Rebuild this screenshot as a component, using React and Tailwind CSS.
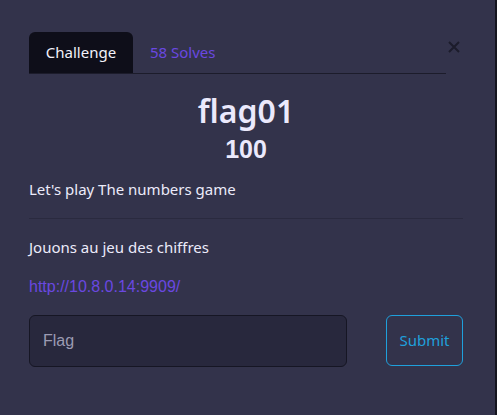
import React, { useState } from 'react';

const ChallengeModal = () => {
    const [tab, setTab] = useState('challenge');
    const [flag, setFlag] = useState('');

    return (
        <div className="flex h-[415px] w-full bg-[#33334b] font-['Noto_Sans',sans-serif] text-[#ecebfa]">
            <div className="flex-1 pl-[29px] pt-[32px]">
                <div className="w-[434px]">
                    {/* Tabs */}
                    <div className="flex items-start">
                        <div className="flex w-[417px] border-b border-[#1c1c2b]">
                            <button
                                type="button"
                                onClick={() => setTab('challenge')}
                                className="h-[41px] w-[104px] rounded-t-md bg-[#0e0e19] text-[15px] text-[#f2f2fa]"
                            >
                                Challenge
                            </button>
                            <button
                                type="button"
                                onClick={() => setTab('solves')}
                                className="h-[41px] px-[17px] text-[15px] text-[#6a48e0]"
                            >
                                58 Solves
                            </button>
                        </div>
                        <button type="button" className="ml-[2px] mt-[9px] text-[#1c1c2b]">
                            <svg width="12" height="12" viewBox="0 0 12 12" fill="none" stroke="currentColor" strokeWidth="2">
                                <path d="M1 1 L11 11 M11 1 L1 11" />
                            </svg>
                        </button>
                    </div>

                    {/* Header */}
                    <h1 className="mt-[18px] text-center text-[32px] font-semibold leading-[38px] text-[#ebe9fc]">flag01</h1>
                    <h2 className="mt-[4px] text-center font-['Liberation_Sans',sans-serif] text-[25px] font-bold leading-[30px] text-[#ebe9fc]">100</h2>

                    {/* Description */}
                    <p className="mt-[14px] text-[15px] leading-[22px]">Let's play The numbers game</p>
                    <hr className="mt-[18px] border-t border-[#2a2a3f]" />
                    <p className="mt-[17px] text-[15px] leading-[22px]">Jouons au jeu des chiffres</p>
                    <a href="#" className="mt-[18px] block font-['Liberation_Sans',sans-serif] text-[16px] leading-[22px] text-[#6a48e0]">
                        http://10.8.0.14:9909/
                    </a>

                    {/* Flag form */}
                    <form onSubmit={(e) => e.preventDefault()} className="mt-[17px] flex items-start justify-between">
                        <input
                            type="text"
                            value={flag}
                            onChange={(e) => setFlag(e.target.value)}
                            placeholder="Flag"
                            className="h-[52px] w-[318px] rounded-md border border-[#161624] bg-[#28283d] px-[13px] font-['Liberation_Sans',sans-serif] text-[16px] text-[#ecebfa] outline-none placeholder:text-[#9c9bb3]"
                        />
                        <button
                            type="submit"
                            className="h-[51px] w-[77px] rounded-md border border-[#1fa0dc] text-[15px] text-[#1fa0dc]"
                        >
                            Submit
                        </button>
                    </form>
                </div>
            </div>
            <div className="w-[2px] bg-[#15151f]" />
        </div>
    );
};

export default function App() {
    return <ChallengeModal />;
}
